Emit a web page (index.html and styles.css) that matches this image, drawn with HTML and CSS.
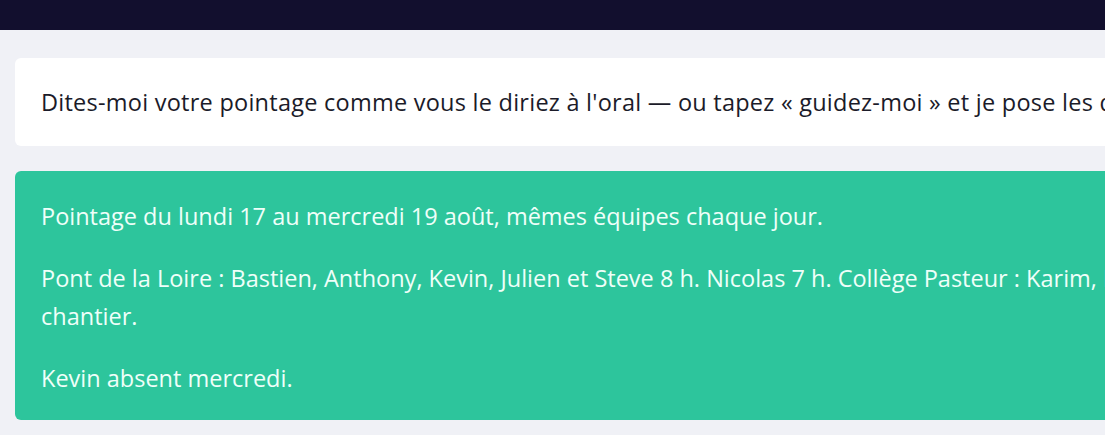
FILE: index.html
```html
<!DOCTYPE html>
<html lang="fr">
<head>
<meta charset="utf-8">
<title>Pointage</title>
<link rel="stylesheet" href="styles.css">
</head>
<body>
<header class="topbar"></header>
<main class="content">
  <section class="card card-intro">
    <p>Dites-moi votre pointage comme vous le diriez à l'oral — ou tapez « guidez-moi » et je pose les questions une par une.</p>
  </section>
  <section class="card card-message">
    <p>Pointage du lundi 17 au mercredi 19 août, mêmes équipes chaque jour.</p>
    <p>Pont de la Loire : Bastien, Anthony, Kevin, Julien et Steve 8 h. Nicolas 7 h. Collège Pasteur : Karim, Mehdi et Yanis 8 h, Lucas 6 h sur le chantier.</p>
    <p>Kevin absent mercredi.</p>
  </section>
</main>
</body>
</html>
```
FILE: styles.css
```css
html, body {
  margin: 0;
  padding: 0;
  overflow: hidden;
}
body {
  background: #f0f1f6;
  font-family: "Open Sans", "Noto Sans", sans-serif;
  width: 1105px;
  height: 435px;
}
.topbar {
  height: 30px;
  background: #120f2e;
}
.content {
  width: 1550px;
  padding: 28px 0 0 15px;
  display: flex;
  flex-direction: column;
  gap: 25px;
}
.card {
  border-radius: 6px;
  padding: 0 26px;
}
.card p {
  margin: 0;
  font-size: 23.5px;
  line-height: 38px;
}
.card-intro {
  background: #ffffff;
  color: #1b1b29;
  height: 88px;
  display: flex;
  align-items: center;
  white-space: nowrap;
}
.card-intro p {
  letter-spacing: 0.25px;
}
.card-message {
  background: #2dc59c;
  color: #effff9;
  padding-top: 26px;
  padding-bottom: 23px;
  display: flex;
  flex-direction: column;
  gap: 24px;
}
```
